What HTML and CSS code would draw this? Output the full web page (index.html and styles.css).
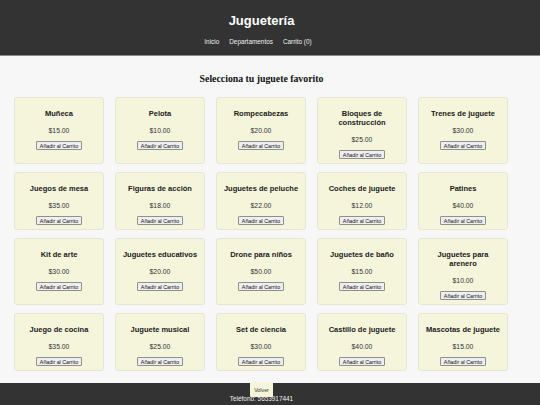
FILE: index.html
```html
<!DOCTYPE html>
<html lang="es">
<head>
<meta charset="utf-8">
<title>Juguetería</title>
<link rel="stylesheet" href="styles.css">
</head>
<body>
<header class="site-header">
  <div class="inner">
    <h1 class="brand">Juguetería</h1>
    <nav class="nav">
      <a href="#">Inicio</a>
      <a href="#">Departamentos</a>
      <a href="#">Carrito (0)</a>
    </nav>
  </div>
</header>
<main class="main">
  <div class="inner">
    <h2 class="heading">Selecciona tu juguete favorito</h2>
    <div class="grid">
      <div class="card"><h3>Muñeca</h3><p>$15.00</p><button>Añadir al Carrito</button></div>
      <div class="card"><h3>Pelota</h3><p>$10.00</p><button>Añadir al Carrito</button></div>
      <div class="card"><h3>Rompecabezas</h3><p>$20.00</p><button>Añadir al Carrito</button></div>
      <div class="card"><h3>Bloques de construcción</h3><p>$25.00</p><button>Añadir al Carrito</button></div>
      <div class="card"><h3>Trenes de juguete</h3><p>$30.00</p><button>Añadir al Carrito</button></div>
      <div class="card"><h3>Juegos de mesa</h3><p>$35.00</p><button>Añadir al Carrito</button></div>
      <div class="card"><h3>Figuras de acción</h3><p>$18.00</p><button>Añadir al Carrito</button></div>
      <div class="card"><h3>Juguetes de peluche</h3><p>$22.00</p><button>Añadir al Carrito</button></div>
      <div class="card"><h3>Coches de juguete</h3><p>$12.00</p><button>Añadir al Carrito</button></div>
      <div class="card"><h3>Patines</h3><p>$40.00</p><button>Añadir al Carrito</button></div>
      <div class="card"><h3>Kit de arte</h3><p>$30.00</p><button>Añadir al Carrito</button></div>
      <div class="card"><h3>Juguetes educativos</h3><p>$20.00</p><button>Añadir al Carrito</button></div>
      <div class="card"><h3>Drone para niños</h3><p>$50.00</p><button>Añadir al Carrito</button></div>
      <div class="card"><h3>Juguetes de baño</h3><p>$15.00</p><button>Añadir al Carrito</button></div>
      <div class="card"><h3>Juguetes para arenero</h3><p>$10.00</p><button>Añadir al Carrito</button></div>
      <div class="card"><h3>Juego de cocina</h3><p>$35.00</p><button>Añadir al Carrito</button></div>
      <div class="card"><h3>Juguete musical</h3><p>$25.00</p><button>Añadir al Carrito</button></div>
      <div class="card"><h3>Set de ciencia</h3><p>$30.00</p><button>Añadir al Carrito</button></div>
      <div class="card"><h3>Castillo de juguete</h3><p>$40.00</p><button>Añadir al Carrito</button></div>
      <div class="card"><h3>Mascotas de juguete</h3><p>$15.00</p><button>Añadir al Carrito</button></div>
    </div>
  </div>
</main>
<footer class="site-footer">
  <div class="inner footer-inner">
    <button class="back">Volver</button>
    <p class="phone">Teléfono: 5653917441</p>
  </div>
</footer>
</body>
</html>
```
FILE: styles.css
```css
html, body {
  margin: 0;
  padding: 0;
}
body {
  background: #f7f7f7;
  font-family: "Liberation Sans", Arial, sans-serif;
  color: #222;
}
.inner {
  width: 523px;
}
.site-header {
  background: #333;
  color: #fff;
  height: 55px;
  border-bottom: 1px solid #8a8a8a;
}
.site-header .inner {
  display: flex;
  flex-direction: column;
  align-items: center;
  padding-top: 13px;
}
.brand {
  margin: 0;
  font-size: 13px;
  line-height: 15px;
  font-weight: bold;
}
.nav {
  display: flex;
  gap: 10px;
  margin-top: 10px;
  padding-right: 7px;
}
.nav a {
  color: #eee;
  text-decoration: none;
  font-size: 6.4px;
  line-height: 8px;
}
.main .inner {
  padding-top: 17px;
  padding-bottom: 12px;
}
.heading {
  margin: 0 0 12px;
  text-align: center;
  font-family: "Liberation Serif", "Times New Roman", serif;
  font-size: 9.8px;
  line-height: 12px;
  font-weight: bold;
  color: #111;
}
.grid {
  display: grid;
  grid-template-columns: repeat(5, 90px);
  column-gap: 11px;
  row-gap: 8px;
  padding-left: 14px;
}
.card {
  background: #f5f5dc;
  border: 1px solid #e6e6d6;
  border-radius: 3px;
  padding: 11px 5px 4px;
  text-align: center;
  display: flex;
  flex-direction: column;
  align-items: center;
}
.card h3 {
  margin: 0 0 8px;
  font-size: 7.5px;
  line-height: 9px;
  font-weight: bold;
  color: #1a1a1a;
}
.card p {
  margin: 0 0 6px;
  font-size: 6.8px;
  line-height: 9px;
  color: #333;
}
.card button {
  font-family: "Liberation Sans", Arial, sans-serif;
  font-size: 5.3px;
  line-height: 6px;
  padding: 0.5px 2.5px;
  background: #efefef;
  border: 1px solid #8f8f8f;
  border-radius: 1px;
  color: #111;
}
.site-footer {
  background: #333;
  color: #fff;
  height: 22px;
}
.footer-inner {
  position: relative;
  text-align: center;
}
.phone {
  margin: 0;
  padding-top: 12px;
  font-size: 6.4px;
  line-height: 8px;
  color: #f0f0f0;
}
.back {
  position: absolute;
  top: -1px;
  left: 250px;
  width: 23px;
  height: 15px;
  padding: 0;
  background: #f5f5dc;
  border: none;
  border-radius: 1px;
  font-family: "Liberation Sans", Arial, sans-serif;
  font-size: 5.3px;
  color: #333;
}
```
